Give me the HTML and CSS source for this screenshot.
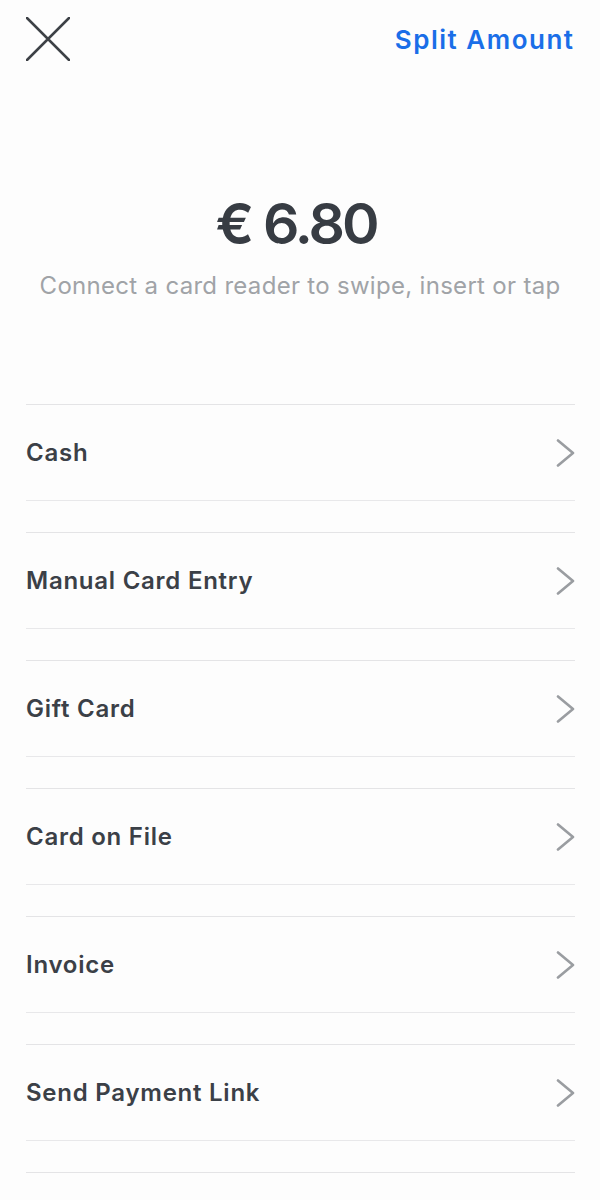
FILE: index.html
```html
<!DOCTYPE html>
<html>
<head>
<meta charset="utf-8">
<link rel="stylesheet" href="styles.css">
</head>
<body>
<div class="screen">
  <header class="topbar">
    <svg class="close" width="44" height="44" viewBox="0 0 44 44"><path d="M1 1 L43 43 M43 1 L1 43" stroke="#3d4146" stroke-width="2.5" stroke-linecap="round" fill="none"/></svg>
    <span class="split">Split Amount</span>
  </header>
  <section class="amount">
    <div class="value"><span class="cur">€</span><span class="num">6.80</span></div>
    <div class="hint">Connect a card reader to swipe, insert or tap</div>
  </section>
  <ul class="methods">
    <li class="method"><span>Cash</span><svg class="chev" width="20" height="28" viewBox="0 0 20 28"><path d="M2 1.5 L17 14 L2 26.5"/></svg></li>
    <li class="method"><span>Manual Card Entry</span><svg class="chev" width="20" height="28" viewBox="0 0 20 28"><path d="M2 1.5 L17 14 L2 26.5"/></svg></li>
    <li class="method"><span>Gift Card</span><svg class="chev" width="20" height="28" viewBox="0 0 20 28"><path d="M2 1.5 L17 14 L2 26.5"/></svg></li>
    <li class="method"><span>Card on File</span><svg class="chev" width="20" height="28" viewBox="0 0 20 28"><path d="M2 1.5 L17 14 L2 26.5"/></svg></li>
    <li class="method"><span>Invoice</span><svg class="chev" width="20" height="28" viewBox="0 0 20 28"><path d="M2 1.5 L17 14 L2 26.5"/></svg></li>
    <li class="method"><span>Send Payment Link</span><svg class="chev" width="20" height="28" viewBox="0 0 20 28"><path d="M2 1.5 L17 14 L2 26.5"/></svg></li>
    <li class="method empty"></li>
  </ul>
</div>
</body>
</html>
```
FILE: styles.css
```css
html, body {
  margin: 0;
  padding: 0;
  background: #fdfdfd;
}
.screen {
  width: 600px;
  height: 1200px;
  overflow: hidden;
  font-family: Inter, "Noto Sans", sans-serif;
}
.topbar {
  display: flex;
  justify-content: space-between;
  align-items: center;
  padding: 17px 27px 0 26px;
  height: 44px;
}
.close { display: block; }
.split {
  color: #1a6ee8;
  font-weight: 600;
  font-size: 26px;
  letter-spacing: 1.5px;
  margin-right: -1.5px;
}
.amount {
  display: flex;
  flex-direction: column;
  align-items: center;
  padding-top: 130px;
}
.value {
  color: #373c43;
  font-size: 57px;
  font-weight: 600;
  line-height: 66px;
  display: flex;
  margin-left: -8px;
}
.cur {
  margin-right: 10px;
  letter-spacing: -1px;
}
.num {
  letter-spacing: -3px;
}
.hint {
  color: #a0a3a7;
  font-size: 24px;
  letter-spacing: 0.3px;
  line-height: 30px;
  margin-top: 14px;
}
.methods {
  list-style: none;
  margin: 103px 25px 0 26px;
  padding: 0;
}
.method {
  display: flex;
  justify-content: space-between;
  align-items: center;
  height: 95px;
  border-top: 1px solid #e4e4e6;
  border-bottom: 1px solid #e8e8ea;
  margin-bottom: 31px;
  color: #3b4047;
  font-size: 24px;
  letter-spacing: 0.75px;
  font-weight: 600;
}
.chev { margin-right: -1px; }
.chev path {
  fill: none;
  stroke: #9a9da1;
  stroke-width: 2.6;
  stroke-linecap: round;
  stroke-linejoin: round;
}
```
